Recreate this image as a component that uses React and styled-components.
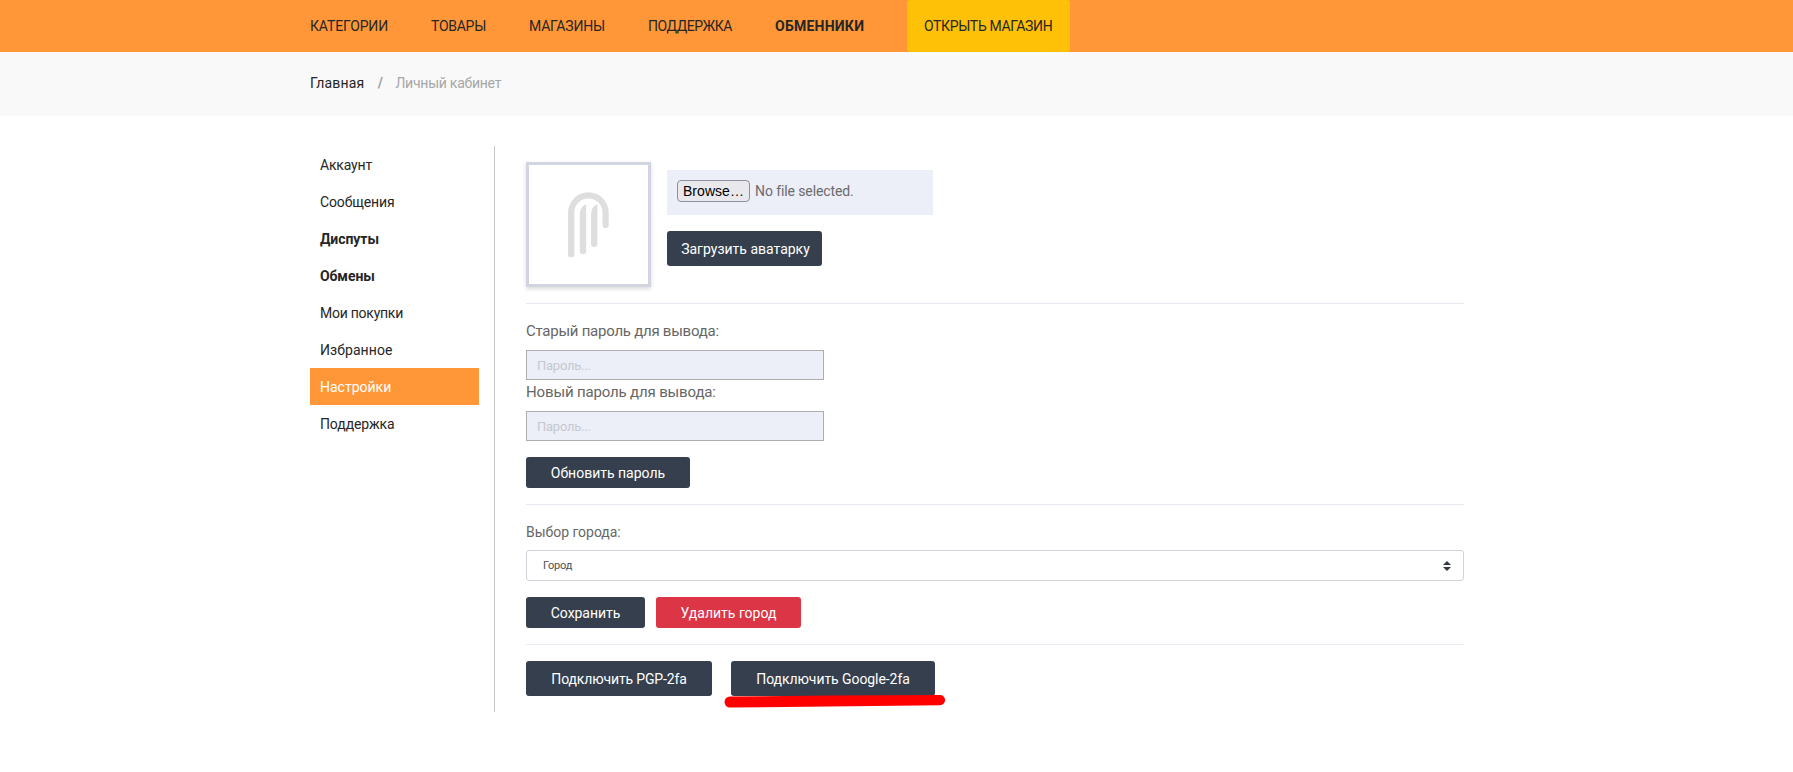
import styled, { createGlobalStyle } from "styled-components";

const navItems = [
  { label: "КАТЕГОРИИ", width: 78, track: -0.14 },
  { label: "ТОВАРЫ", width: 55, track: -0.27 },
  { label: "МАГАЗИНЫ", width: 76, track: -0.19 },
  { label: "ПОДДЕРЖКА", width: 84, track: -0.44 },
  { label: "ОБМЕННИКИ", width: 89, track: 0.25, bold: true },
];

const menuItems = [
  { label: "Аккаунт", track: -0.17 },
  { label: "Сообщения", track: -0.12 },
  { label: "Диспуты", track: -0.06, bold: true },
  { label: "Обмены", track: -0.08, bold: true },
  { label: "Мои покупки", track: -0.25 },
  { label: "Избранное", track: 0.08 },
  { label: "Настройки", track: 0, active: true },
  { label: "Поддержка", track: -0.12 },
];

function AvatarLogo() {
  return (
    <svg width="119" height="119" viewBox="0 0 119 119" fill="#dedede">
      <path d="M39.1 47.5a20.3 20.3 0 0 1 40.6 0V60a3.1 3.1 0 0 1-6.2 0V47.5a14.1 14.1 0 0 0-28.2 0V90.5q0 1.5-1.5 1.5h-3.2q-1.5 0-1.5-1.5z" />
      <path d="M50.8 50Q50.8 41.5 57.2 39V86a3.2 3.2 0 0 1-6.4 0z" />
      <path d="M62 50Q62 41.5 68.4 39V78.7a3.2 3.2 0 0 1-6.4 0z" />
    </svg>
  );
}

export default function App() {
  return (
    <>
      <GlobalStyle />
      <Navbar>
        {navItems.map((item) => (
          <NavLink key={item.label} $width={item.width} $track={item.track} $bold={item.bold}>
            {item.label}
          </NavLink>
        ))}
        <OpenShop>ОТКРЫТЬ МАГАЗИН</OpenShop>
      </Navbar>

      <Breadcrumb>
        <Crumb $track={0.17}>Главная</Crumb>
        <Separator>/</Separator>
        <Crumb $muted $track={-0.24}>
          Личный кабинет
        </Crumb>
      </Breadcrumb>

      <Page>
        <Sidebar>
          {menuItems.map((item) => (
            <MenuItem key={item.label} $track={item.track} $bold={item.bold} $active={item.active}>
              {item.label}
            </MenuItem>
          ))}
        </Sidebar>

        <Content>
          <AvatarRow>
            <Avatar>
              <AvatarLogo />
            </Avatar>
            <Upload>
              <FileField>
                <Browse>Browse…</Browse>
                <FileName>No file selected.</FileName>
              </FileField>
              <Button $width={155} $height={35} $indent={2}>
                Загрузить аватарку
              </Button>
            </Upload>
          </AvatarRow>

          <Divider />

          <Label $size={15} $height={23} $track={-0.25}>
            Старый пароль для вывода:
          </Label>
          <PasswordInput type="password" placeholder="Пароль..." />
          <Label $size={15} $height={23} $track={-0.15}>
            Новый пароль для вывода:
          </Label>
          <PasswordInput type="password" placeholder="Пароль..." />
          <Actions>
            <Button $width={164}>Обновить пароль</Button>
          </Actions>

          <Divider />

          <Label $size={14} $height={22} $track={-0.04}>
            Выбор города:
          </Label>
          <CitySelect>
            Город
            <svg width="8" height="10" viewBox="0 0 8 10" fill="#343a40">
              <path d="M4 0L8 4H0zM0 6H8L4 10z" />
            </svg>
          </CitySelect>
          <Actions>
            <Button $width={119} $track={-0.05}>
              Сохранить
            </Button>
            <Button $width={145} $danger>
              Удалить город
            </Button>
          </Actions>

          <Divider />

          <TwoFactor>
            <Button $width={186} $height={35} $track={-0.14}>
              Подключить PGP-2fa
            </Button>
            <Marked>
              <Button $width={204} $height={35} $track={-0.07}>
                Подключить Google-2fa
              </Button>
              <Marker width="224" height="14" viewBox="0 0 224 14">
                <path
                  d="M7 2.5L110 1.6L217 1A5 5 0 0 1 217 11.2L150 12L7 13.5A5.5 5.5 0 0 1 7 2.5Z"
                  fill="#ff0000"
                />
              </Marker>
            </Marked>
          </TwoFactor>
        </Content>
      </Page>
    </>
  );
}

const GlobalStyle = createGlobalStyle`
  * {
    box-sizing: border-box;
  }

  body {
    margin: 0;
    min-height: 100vh;
    background: #fff;
    color: #262626;
    font-family: Roboto, "Liberation Sans", sans-serif;
    font-size: 14px;
  }
`;

const Navbar = styled.nav`
  display: flex;
  align-items: center;
  gap: 43px;
  height: 52px;
  padding-left: 310px;
  background: #ff9738;
`;

const NavLink = styled.a`
  width: ${(p) => p.$width}px;
  line-height: 52px;
  white-space: nowrap;
  font-weight: ${(p) => (p.$bold ? 700 : 400)};
  letter-spacing: ${(p) => p.$track}px;
`;

const OpenShop = styled.a`
  width: 163px;
  height: 52px;
  line-height: 52px;
  padding-left: 17px;
  border-radius: 3px;
  background: #ffc107;
  white-space: nowrap;
  letter-spacing: -0.35px;
`;

const Breadcrumb = styled.div`
  display: flex;
  align-items: center;
  height: 64px;
  padding: 0 0 2px 310px;
  background: #f9f9f9;
`;

const Crumb = styled.span`
  color: ${(p) => (p.$muted ? "#a6a6a6" : "#262626")};
  letter-spacing: ${(p) => p.$track}px;
  white-space: nowrap;
`;

const Separator = styled.span`
  width: 31px;
  padding-left: 1px;
  text-align: center;
  font-weight: 700;
  color: #a0a0a0;
`;

const Page = styled.div`
  display: flex;
  width: 1154px;
  margin: 30px 0 0 310px;
`;

const Sidebar = styled.aside`
  width: 185px;
  height: 566px;
  padding-right: 15px;
  border-right: 1px solid #c6c6c6;
`;

const MenuItem = styled.a`
  display: block;
  height: 37px;
  padding-left: 10px;
  line-height: 38px;
  font-weight: ${(p) => (p.$bold ? 700 : 400)};
  letter-spacing: ${(p) => p.$track}px;
  color: ${(p) => (p.$active ? "#fff" : "#262626")};
  background: ${(p) => (p.$active ? "#ff9738" : "transparent")};
`;

const Content = styled.main`
  flex: 1;
  padding: 16px 0 0 31px;
`;

const AvatarRow = styled.div`
  display: flex;
  gap: 16px;
`;

const Avatar = styled.div`
  width: 125px;
  height: 125px;
  border: 3px solid #d1d5df;
  box-shadow: 0 2px 4px rgba(0, 0, 0, 0.15);
`;

const Upload = styled.div`
  display: flex;
  flex-direction: column;
  gap: 16px;
  padding-top: 8px;
`;

const FileField = styled.div`
  display: flex;
  align-items: flex-start;
  gap: 5px;
  width: 266px;
  height: 45px;
  padding: 10px;
  background: #eceef8;
`;

const Browse = styled.button`
  width: 73px;
  height: 22px;
  padding: 0;
  border: 1px solid #8f8f9d;
  border-radius: 4px;
  background: #e9e9ed;
  color: #000;
  font: 14px/20px "Liberation Sans", Arial, sans-serif;
  letter-spacing: 0.05px;
`;

const FileName = styled.span`
  line-height: 23px;
  letter-spacing: -0.1px;
  color: #6b6b6b;
`;

const Button = styled.button`
  width: ${(p) => p.$width}px;
  height: ${(p) => p.$height || 31}px;
  padding: 0 0 0 ${(p) => p.$indent || 0}px;
  border: 0;
  border-radius: 3px;
  background: ${(p) => (p.$danger ? "#dc3546" : "#363f4e")};
  color: #fff;
  font-family: inherit;
  font-size: 14px;
  letter-spacing: ${(p) => p.$track || 0}px;
  white-space: nowrap;
`;

const Divider = styled.hr`
  height: 1px;
  margin: 16px 0 15px;
  border: 0;
  background: #e9e9f2;
`;

const Label = styled.label`
  display: block;
  height: ${(p) => p.$height}px;
  margin-bottom: 8px;
  font-size: ${(p) => p.$size}px;
  line-height: ${(p) => p.$height + 2}px;
  letter-spacing: ${(p) => p.$track}px;
  color: #666;
`;

const PasswordInput = styled.input`
  display: block;
  width: 298px;
  height: 30px;
  padding: 0 10px;
  border: 1px solid #adadad;
  border-radius: 0;
  background: #eceef8;
  font-family: inherit;
  font-size: 13px;

  &::placeholder {
    color: #c6c8d0;
    letter-spacing: -0.25px;
  }
`;

const CitySelect = styled.div`
  display: flex;
  align-items: center;
  justify-content: space-between;
  height: 31px;
  padding: 0 12px 0 16px;
  border: 1px solid #ced4da;
  border-radius: 3px;
  font-size: 11px;
  letter-spacing: -0.2px;
  color: #495057;
`;

const Actions = styled.div`
  display: flex;
  gap: 11px;
  margin-top: 16px;
`;

const TwoFactor = styled.div`
  display: flex;
  gap: 19px;
  margin-top: 16px;
`;

const Marked = styled.div`
  position: relative;
`;

/* hand-drawn underline over the button's lower edge */
const Marker = styled.svg`
  position: absolute;
  left: -8px;
  top: 33px;
`;
